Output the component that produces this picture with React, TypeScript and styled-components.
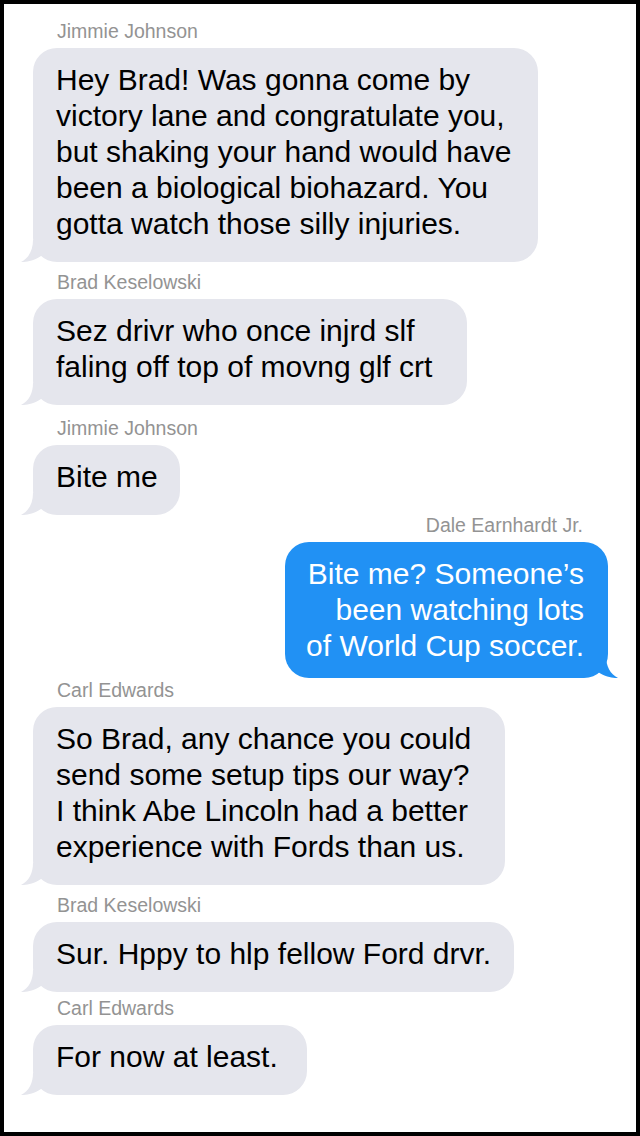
import React from "react";
import styled, { createGlobalStyle } from "styled-components";

const GREY = "#E5E6ED";
const BLUE = "#2191F4";

const GlobalStyle = createGlobalStyle`
  html, body {
    margin: 0;
    padding: 0;
    background: #ffffff;
  }
  body {
    font-family: "Liberation Sans", Arial, Helvetica, sans-serif;
    -webkit-font-smoothing: antialiased;
  }
`;

const Frame = styled.main`
  width: 640px;
  height: 1136px;
  box-sizing: border-box;
  border: 4px solid #000000;
  background: #ffffff;
  display: flex;
  flex-direction: column;
  padding: 15px 28px 0 29px;
  overflow: hidden;
`;

const Group = styled.section<{ $out: boolean; $gap: number }>`
  display: flex;
  flex-direction: column;
  align-items: ${(p) => (p.$out ? "flex-end" : "flex-start")};
  gap: 5px;
  margin-top: ${(p) => p.$gap}px;
`;

const Name = styled.div<{ $out: boolean }>`
  font-size: 19.5px;
  line-height: 24px;
  color: #939393;
  padding: ${(p) => (p.$out ? "0 25px 0 0" : "0 0 0 24px")};
  white-space: nowrap;
`;

const Bubble = styled.div<{ $out: boolean; $width: number }>`
  position: relative;
  box-sizing: border-box;
  width: ${(p) => p.$width}px;
  font-size: 30px;
  line-height: 36px;
  padding: ${(p) => (p.$out ? "14px 24px 14px 18px" : "14px 0 20px 23px")};
  border-radius: 24px;
  background: ${(p) => (p.$out ? BLUE : GREY)};
  color: ${(p) => (p.$out ? "#ffffff" : "#000000")};
  text-align: ${(p) => (p.$out ? "right" : "left")};
  white-space: nowrap;
`;

const Line = styled.span`
  display: block;
  position: relative;
  z-index: 1;
`;

const TailSvg = styled.svg<{ $out: boolean }>`
  position: absolute;
  bottom: 0;
  width: 24px;
  height: 22px;
  ${(p) =>
    p.$out
      ? "right: -10px; transform: scaleX(-1);"
      : "left: -12px;"}
  fill: ${(p) => (p.$out ? BLUE : GREY)};
`;

const Tail = ({ out }: { out: boolean }) => (
  <TailSvg $out={out} viewBox="0 0 24 22" aria-hidden="true">
    <path d="M12 0 C12 10 8 18 0 22 C5 22.3 12 21 20 16 L20 0 Z" />
  </TailSvg>
);

type Msg = {
  name: string;
  out?: boolean;
  lines: string[];
  width: number;
  gap: number;
};

const messages: Msg[] = [
  {
    name: "Jimmie Johnson",
    width: 505,
    gap: 0,
    lines: [
      "Hey Brad! Was gonna come by",
      "victory lane and congratulate you,",
      "but shaking your hand would have",
      "been a biological biohazard. You",
      "gotta watch those silly injuries.",
    ],
  },
  {
    name: "Brad Keselowski",
    width: 434,
    gap: 8,
    lines: ["Sez drivr who once injrd slf", "faling off top of movng glf crt"],
  },
  {
    name: "Jimmie Johnson",
    width: 147,
    gap: 11,
    lines: ["Bite me"],
  },
  {
    name: "Dale Earnhardt Jr.",
    out: true,
    width: 323,
    gap: -2,
    lines: ["Bite me? Someone\u2019s", "been watching lots", "of World Cup soccer."],
  },
  {
    name: "Carl Edwards",
    width: 472,
    gap: 0,
    lines: [
      "So Brad, any chance you could",
      "send some setup tips our way?",
      "I think Abe Lincoln had a better",
      "experience with Fords than us.",
    ],
  },
  {
    name: "Brad Keselowski",
    width: 481,
    gap: 8,
    lines: ["Sur. Hppy to hlp fellow Ford drvr."],
  },
  {
    name: "Carl Edwards",
    width: 274,
    gap: 4,
    lines: ["For now at least."],
  },
];

export default function App() {
  return (
    <>
      <GlobalStyle />
      <Frame>
        {messages.map((m, i) => (
          <Group key={i} $out={!!m.out} $gap={m.gap}>
            <Name $out={!!m.out}>{m.name}</Name>
            <Bubble $out={!!m.out} $width={m.width}>
              <Tail out={!!m.out} />
              {m.lines.map((l, j) => (
                <Line key={j}>{l}</Line>
              ))}
            </Bubble>
          </Group>
        ))}
      </Frame>
    </>
  );
}
